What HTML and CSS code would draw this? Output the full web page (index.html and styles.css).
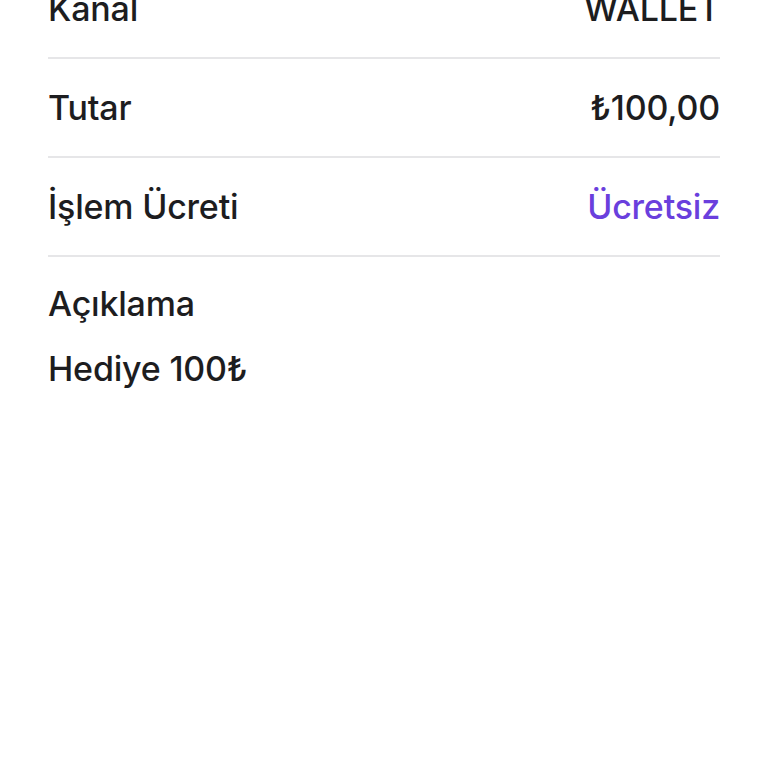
FILE: index.html
```html
<!DOCTYPE html>
<html lang="tr">

<head>
  <meta charset="UTF-8">
  <meta name="viewport" content="width=device-width, initial-scale=1.0">
  <title>İşlem Detayı</title>
  <link rel="stylesheet" href="styles.css">
</head>

<body>
  <div class="detail">
    <div class="row">
      <span class="label">Kanal</span>
      <span class="value">WALLET</span>
    </div>
    <div class="row">
      <span class="label">Tutar</span>
      <span class="value">₺100,00</span>
    </div>
    <div class="row">
      <span class="label">İşlem Ücreti</span>
      <span class="value free">Ücretsiz</span>
    </div>
    <div class="note">
      <p class="label">Açıklama</p>
      <p class="text">Hediye 100₺</p>
    </div>
  </div>
</body>

</html>
```

FILE: styles.css
```css
* {
  margin: 0;
  padding: 0;
  box-sizing: border-box;
}

body {
  background: #fff;
  color: #1d1d1f;
  font-family: Inter, "Liberation Sans", sans-serif;
  font-weight: 500;
  font-size: 34px;
  line-height: 40px;
  letter-spacing: -0.2px;
}

.detail {
  margin: -40px 48px 0;
}

.row {
  display: flex;
  justify-content: space-between;
  align-items: center;
  height: 99px;
  border-bottom: 2px solid #e6e6e8;
}

.value {
  text-align: right;
}

.value.free {
  color: #6a3fdd;
}

.note {
  padding-top: 27px;
  display: flex;
  flex-direction: column;
  gap: 25px;
}
```
